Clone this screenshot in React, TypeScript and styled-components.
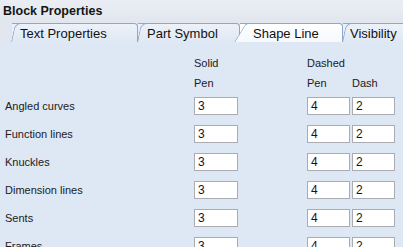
import React from 'react';
import styled, { createGlobalStyle } from 'styled-components';

const GlobalStyle = createGlobalStyle`
  html, body {
    margin: 0;
    padding: 0;
    overflow: hidden;
    background: #dee7f4;
  }
  * {
    box-sizing: border-box;
  }
`;

const Window = styled.div`
  width: 403px;
  height: 247px;
  overflow: hidden;
  display: flex;
  flex-direction: column;
  font-family: "Liberation Sans", Arial, sans-serif;
  color: #1b1b1b;
  background: #dee7f4;
`;

const TitleBar = styled.div`
  height: 21px;
  flex-shrink: 0;
  display: flex;
  align-items: center;
  padding-left: 3px;
  font-weight: bold;
  font-size: 12.5px;
  color: #151515;
  background: linear-gradient(#eaeef4, #e2e7ef);
`;

const TabStrip = styled.div`
  height: 21px;
  flex-shrink: 0;
  display: flex;
  align-items: flex-end;
  padding-left: 12px;
  background: #e2e7ef;
`;

const Tab = styled.div<{ $width: number; $active?: boolean; $indent: number }>`
  position: relative;
  width: ${p => p.$width}px;
  flex-shrink: 0;
  height: 19px;
  padding-left: ${p => p.$indent}px;
  display: flex;
  align-items: center;
  font-size: 13px;
  color: #111;
  border-top: 1px solid #8ea8cc;
  border-right: 1px solid #8ea8cc;
  border-top-right-radius: 4px;
  background: ${p => (p.$active ? 'linear-gradient(#ffffff, #f6f8fc)' : 'linear-gradient(#edf2f9, #dfe8f4)')};
  z-index: ${p => (p.$active ? 3 : 1)};

  &::before {
    content: '';
    position: absolute;
    left: ${p => (p.$active ? '-6px' : '-1px')};
    top: -1px;
    bottom: 0;
    width: 14px;
    border-left: 1px solid #8ea8cc;
    border-top: 1px solid #8ea8cc;
    border-top-left-radius: ${p => (p.$active ? '3px' : '6px')};
    background: inherit;
    transform-origin: bottom left;
    transform: ${p => (p.$active ? 'skewX(-32deg)' : 'skewX(-12deg)')};
    z-index: -1;
  }
`;

const TabLabel = styled.span`
  position: relative;
  white-space: nowrap;
`;

const Panel = styled.div`
  flex: 1;
  padding: 11px 0 0 5px;
  background: #dee7f4;
`;

const Row = styled.div<{ $height: number }>`
  display: grid;
  grid-template-columns: 187px 44px 65px 43px 43px;
  column-gap: 2px;
  height: ${p => p.$height}px;
  font-size: 11px;
  align-items: center;
`;

const Cell = styled.div<{ $col: number }>`
  grid-column: ${p => p.$col};
  color: #1b1b1b;
  white-space: nowrap;
`;

const Field = styled.div<{ $col: number }>`
  grid-column: ${p => p.$col};
  height: 18px;
  padding-left: 3px;
  display: flex;
  align-items: center;
  font-size: 12px;
  color: #14141e;
  background: #fff;
  border: 1px solid #a9adb3;
`;

const tabs = [
  { title: 'Text Properties', width: 126, indent: 8 },
  { title: 'Part Symbol', width: 102, indent: 9 },
  { title: 'Shape Line', width: 103, indent: 13, active: true },
  { title: 'Visibility', width: 70, indent: 7 },
];

const rows = [
  { name: 'Angled curves', solid: 3, pen: 4, dash: 2 },
  { name: 'Function lines', solid: 3, pen: 4, dash: 2 },
  { name: 'Knuckles', solid: 3, pen: 4, dash: 2 },
  { name: 'Dimension lines', solid: 3, pen: 4, dash: 2 },
  { name: 'Sents', solid: 3, pen: 4, dash: 2 },
  { name: 'Frames', solid: 3, pen: 4, dash: 2 },
];

export default function App() {
  return (
    <>
      <GlobalStyle />
      <Window>
        <TitleBar>Block Properties</TitleBar>
        <TabStrip>
          {tabs.map(t => (
            <Tab key={t.title} $width={t.width} $indent={t.indent} $active={t.active}>
              <TabLabel>{t.title}</TabLabel>
            </Tab>
          ))}
        </TabStrip>
        <Panel>
          <Row $height={20}>
            <Cell $col={2}>Solid</Cell>
            <Cell $col={4}>Dashed</Cell>
          </Row>
          <Row $height={19}>
            <Cell $col={2}>Pen</Cell>
            <Cell $col={4}>Pen</Cell>
            <Cell $col={5}>Dash</Cell>
          </Row>
          {rows.map(r => (
            <Row key={r.name} $height={28}>
              <Cell $col={1}>{r.name}</Cell>
              <Field $col={2}>{r.solid}</Field>
              <Field $col={4}>{r.pen}</Field>
              <Field $col={5}>{r.dash}</Field>
            </Row>
          ))}
        </Panel>
      </Window>
    </>
  );
}
